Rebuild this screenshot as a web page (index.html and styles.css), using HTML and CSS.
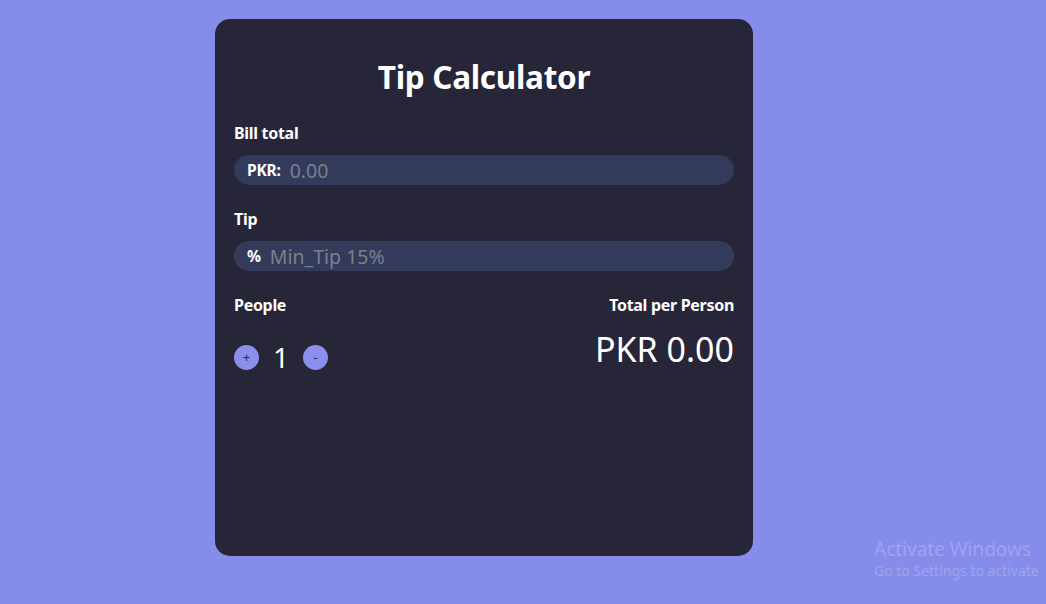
FILE: index.html
```html
<!DOCTYPE html>
<html>
<head>
<meta charset="utf-8">
<link rel="stylesheet" href="styles.css">
</head>
<body>
<main class="card">
  <h1 class="title">Tip Calculator</h1>
  <label class="label">Bill total</label>
  <div class="field">
    <span class="prefix">PKR:</span>
    <span class="placeholder">0.00</span>
  </div>
  <label class="label">Tip</label>
  <div class="field">
    <span class="prefix">%</span>
    <span class="placeholder">Min_Tip 15%</span>
  </div>
  <div class="bottom">
    <div class="col">
      <span class="label">People</span>
      <div class="counter">
        <span class="btn">+</span>
        <span class="count">1</span>
        <span class="btn">-</span>
      </div>
    </div>
    <div class="col right">
      <span class="label">Total per Person</span>
      <span class="total">PKR 0.00</span>
    </div>
  </div>
</main>
<div class="watermark">
  <div class="wm1">Activate Windows</div>
  <div class="wm2">Go to Settings to activate</div>
</div>
</body>
</html>
```

FILE: styles.css
```css
html, body {
  margin: 0;
  padding: 0;
}
body {
  background: #868cea;
  width: 1046px;
  height: 604px;
  overflow: hidden;
  font-family: "Noto Sans", "Open Sans", sans-serif;
  color: #ffffff;
  position: relative;
}
.card {
  box-sizing: border-box;
  margin: 19px 0 0 215px;
  width: 538px;
  height: 537px;
  background: #272638;
  border-radius: 15px;
  padding: 40px 19px 0 19px;
  display: flex;
  flex-direction: column;
}
.title {
  margin: 0 0 28px 0;
  font-size: 31.5px;
  font-weight: 700;
  text-align: center;
  line-height: 36px;
  letter-spacing: -0.3px;
}
.label {
  display: block;
  font-size: 16px;
  font-weight: 700;
  line-height: 20px;
  letter-spacing: -0.3px;
}
.field {
  margin: 12px 0 24px 0;
  height: 30px;
  border-radius: 15px;
  background: #343a5a;
  display: flex;
  align-items: center;
  padding: 0 13px;
  gap: 9px;
}
.prefix {
  font-size: 15.5px;
  font-weight: 700;
  letter-spacing: -0.2px;
}
.placeholder {
  font-size: 19.5px;
  color: #7c7f90;
}
.bottom {
  display: flex;
  justify-content: space-between;
}
.col {
  display: flex;
  flex-direction: column;
}
.col.right {
  align-items: flex-end;
}
.counter {
  display: flex;
  align-items: center;
  margin-top: 27px;
  gap: 14px;
}
.btn {
  width: 25px;
  height: 25px;
  border-radius: 50%;
  background: #8a8feb;
  color: #2c2c44;
  font-size: 13px;
  display: flex;
  align-items: center;
  justify-content: center;
  line-height: 1;
}
.count {
  font-size: 28px;
  line-height: 30px;
}
.total {
  font-size: 34px;
  line-height: 40px;
  margin-top: 14px;
}
.watermark {
  position: absolute;
  left: 874px;
  top: 537px;
  color: #9ea3ee;
  white-space: nowrap;
}
.wm1 {
  font-size: 19px;
  line-height: 24px;
}
.wm2 {
  font-size: 14px;
  line-height: 20px;
}
```
